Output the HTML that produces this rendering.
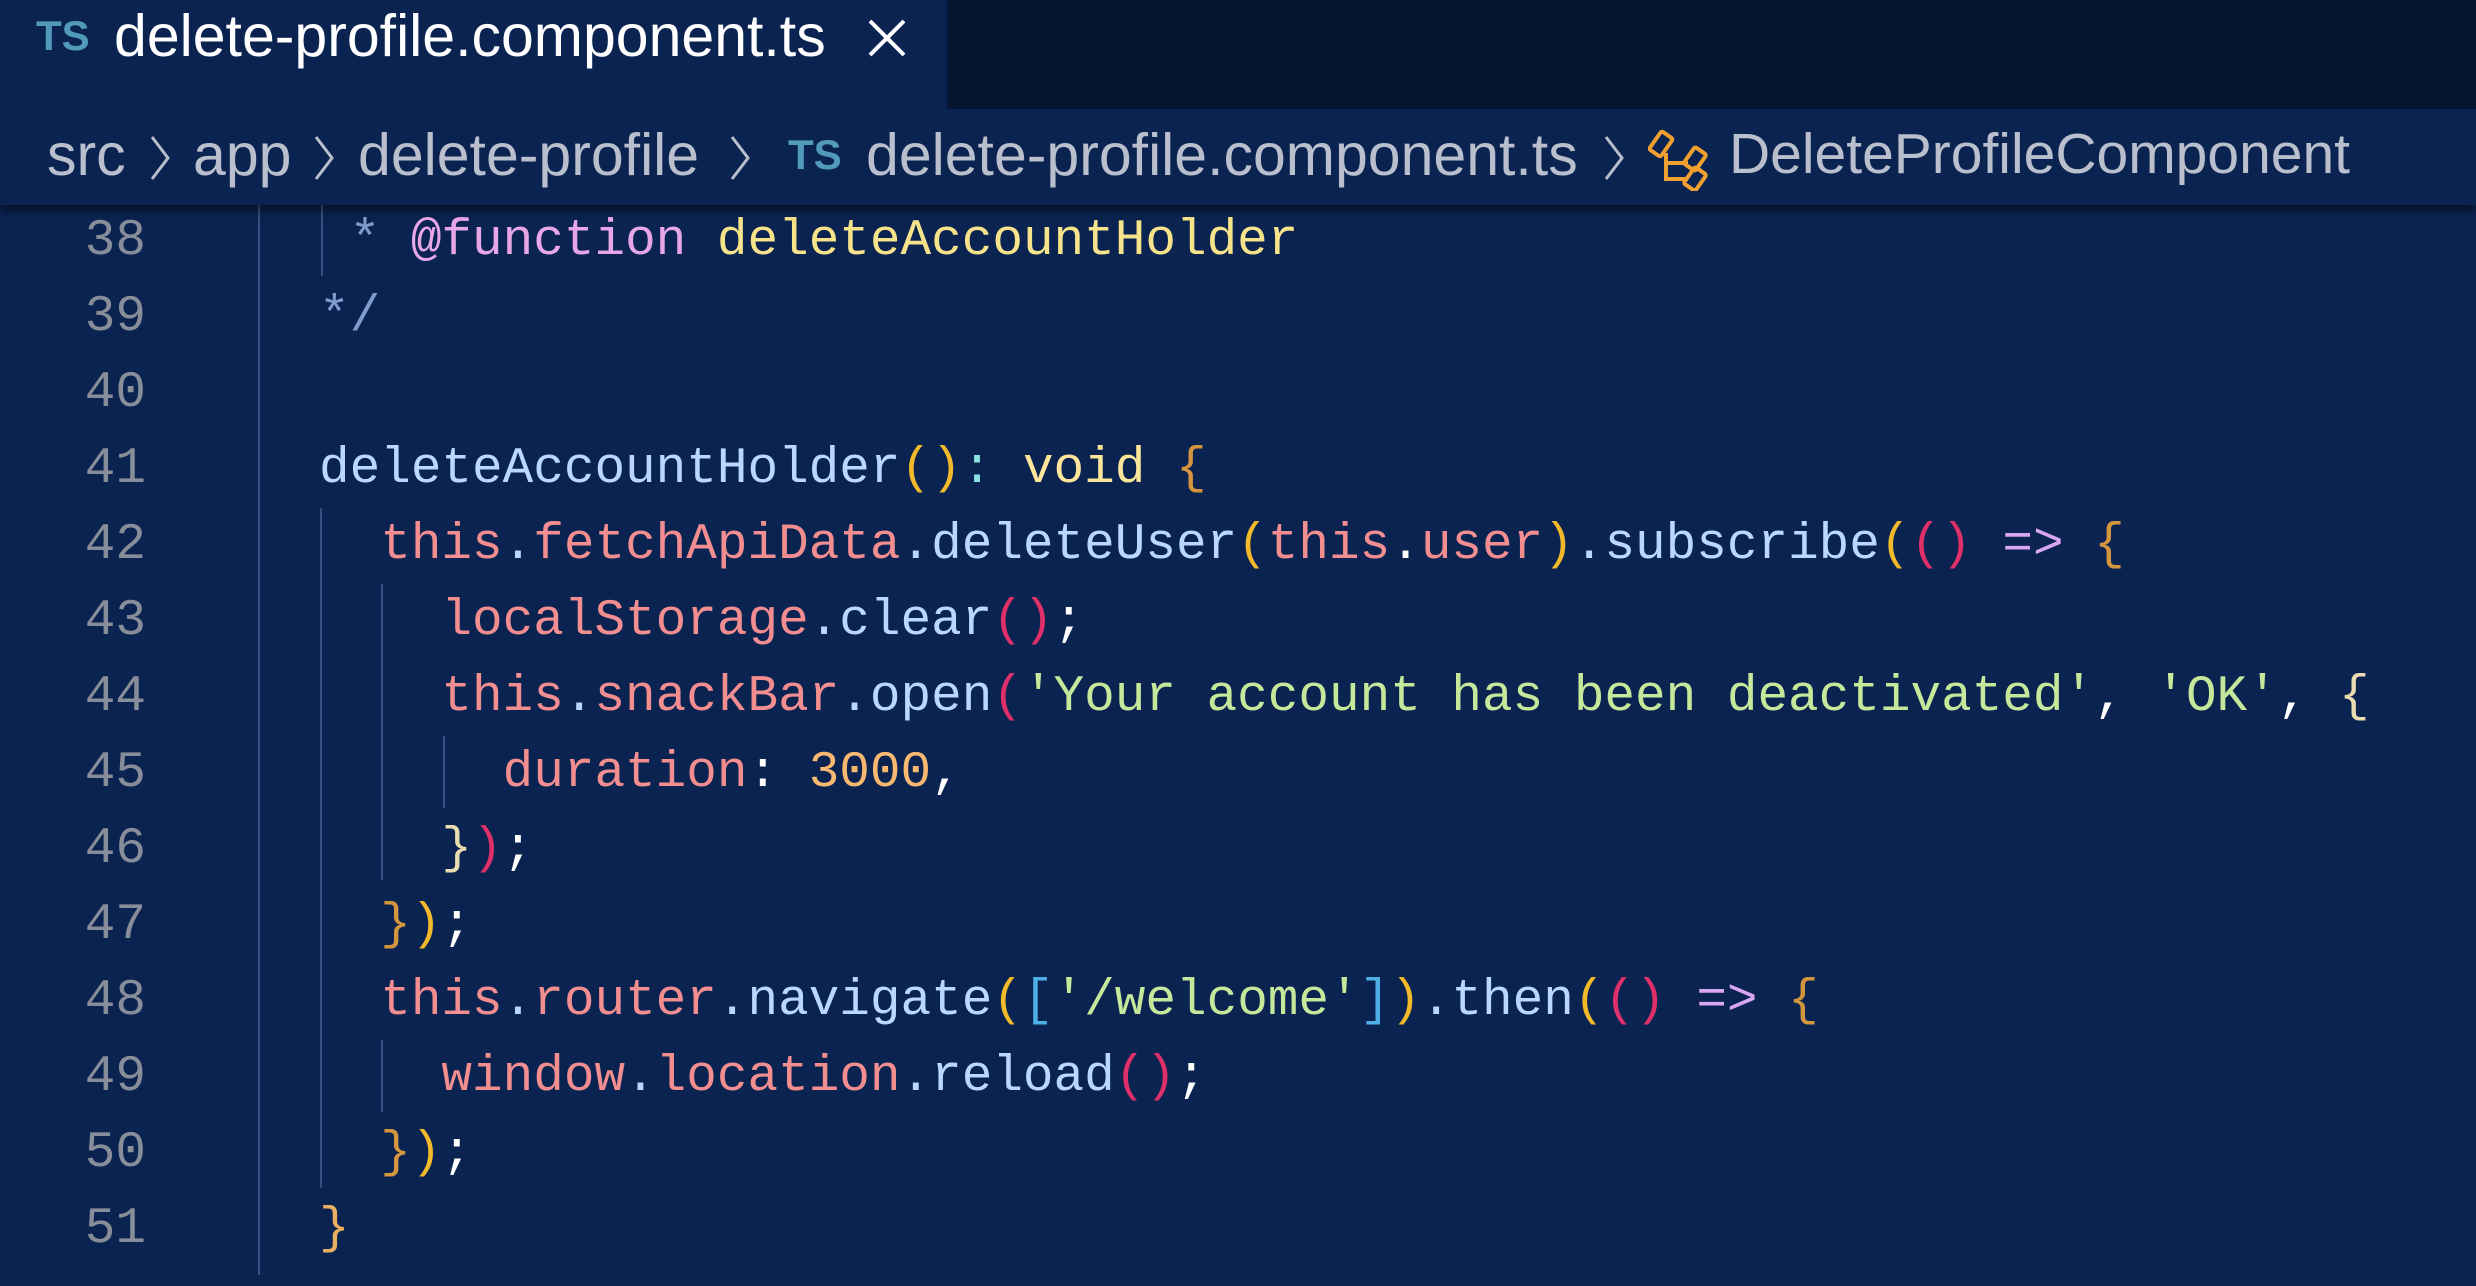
<!DOCTYPE html>
<html><head><meta charset="utf-8"><style>
*{margin:0;padding:0;box-sizing:border-box}
body{width:2476px;height:1286px;background:#0a2350;overflow:hidden;position:relative;font-family:"Liberation Sans",sans-serif}
.abs{position:absolute;white-space:pre}
#tabbar{position:absolute;left:0;top:0;width:2476px;height:109px;background:#061631}
#tab{position:absolute;left:0;top:0;width:947px;height:109px;background:#0a2350}
#crumb{position:absolute;left:0;top:109px;width:2476px;height:96px;background:#0a2350;box-shadow:0 6px 8px rgba(0,0,0,0.45);z-index:5}
.ts{font-weight:bold;color:#519aba;font-size:42px}
.cr{color:#b9bfcc;font-size:59px}
.chev{position:absolute}
.ln{position:absolute;left:0;width:146px;text-align:right;font-family:"Liberation Mono",monospace;font-size:51px;color:#878d99;line-height:76px;height:76px}
.code{position:absolute;left:319px;font-family:"Liberation Mono",monospace;font-size:51px;line-height:76px;height:76px;white-space:pre;color:#b8d8ff}
.g{position:absolute;width:2px;background:#3b4d82}
.t{color:#f28d90}.m{color:#b8d8ff}.p1{color:#f2b92a}.p2{color:#e0306a}.ar{color:#d9a6f2}.br{color:#d4953f}.s{color:#c5e89a}.w{color:#ffffff}.n{color:#f9b970}.k{color:#fde59a}.c{color:#8be3e3}.cm{color:#7f9ccc}.at{color:#e7a6e7}.fy{color:#f6e38a}.sq{color:#4fb0e8}.pb{color:#e8dcb0}
</style></head><body>
<div id="tabbar"><div id="tab"></div></div>
<div class="abs ts" style="left:36px;top:12px">TS</div>
<div class="abs" style="left:114px;top:2px;font-size:59px;color:#ffffff">delete-profile.component.ts</div>
<svg class="abs" style="left:866px;top:17px" width="42" height="42" viewBox="0 0 42 42"><path d="M4 4L38 38M38 4L4 38" stroke="#fff" stroke-width="4" fill="none"/></svg>

<div id="crumb">
<div class="abs cr" style="left:47px;top:12px">src</div>
<svg class="chev" style="left:148px;top:24px" width="24" height="50"><path d="M4 4L20 25L4 46" stroke="#b9bfcc" stroke-width="3" fill="none"/></svg>
<div class="abs cr" style="left:193px;top:12px">app</div>
<svg class="chev" style="left:312px;top:24px" width="24" height="50"><path d="M4 4L20 25L4 46" stroke="#b9bfcc" stroke-width="3" fill="none"/></svg>
<div class="abs cr" style="left:358px;top:12px">delete-profile</div>
<svg class="chev" style="left:728px;top:24px" width="24" height="50"><path d="M4 4L20 25L4 46" stroke="#b9bfcc" stroke-width="3" fill="none"/></svg>
<div class="abs ts" style="left:788px;top:22px">TS</div>
<div class="abs cr" style="left:866px;top:12px">delete-profile.component.ts</div>
<svg class="chev" style="left:1602px;top:24px" width="24" height="50"><path d="M4 4L20 25L4 46" stroke="#b9bfcc" stroke-width="3" fill="none"/></svg>
<svg class="abs" style="left:1648px;top:18px" width="66" height="64" viewBox="0 0 66 64"><g stroke="#f0a030" stroke-width="4" fill="none"><rect x="6" y="6" width="14" height="22" rx="2" transform="rotate(35 13 17)"/><rect x="40" y="22" width="14" height="20" rx="2" transform="rotate(35 47 32)"/><rect x="40" y="42" width="14" height="20" rx="2" transform="rotate(35 47 52)"/><path d="M18 26V52H40M18 36H40"/></g></svg>
<div class="abs cr" style="left:1729px;top:12px;font-size:57px">DeleteProfileComponent</div>
</div>

<div class="g" style="left:258px;top:205px;height:1070px"></div>
<div class="g" style="left:321px;top:205px;height:71px"></div>
<div class="g" style="left:320px;top:508px;height:680px"></div>
<div class="g" style="left:381px;top:584px;height:296px"></div>
<div class="g" style="left:381px;top:1040px;height:72px"></div>
<div class="g" style="left:443px;top:736px;height:72px"></div>

<div class="ln" style="top:204px">38</div>
<div class="ln" style="top:280px">39</div>
<div class="ln" style="top:356px">40</div>
<div class="ln" style="top:432px">41</div>
<div class="ln" style="top:508px">42</div>
<div class="ln" style="top:584px">43</div>
<div class="ln" style="top:660px">44</div>
<div class="ln" style="top:736px">45</div>
<div class="ln" style="top:812px">46</div>
<div class="ln" style="top:888px">47</div>
<div class="ln" style="top:964px">48</div>
<div class="ln" style="top:1040px">49</div>
<div class="ln" style="top:1116px">50</div>
<div class="ln" style="top:1192px">51</div>

<div class="code" style="top:204px"> <span class="cm">*</span> <span class="at">@function</span> <span class="fy">deleteAccountHolder</span></div>
<div class="code" style="top:280px"><span class="cm">*/</span></div>
<div class="code" style="top:432px"><span class="m">deleteAccountHolder</span><span class="p1">()</span><span class="c">:</span> <span class="k">void</span> <span class="br">{</span></div>
<div class="code" style="top:508px">  <span class="t">this</span><span class="m">.</span><span class="t">fetchApiData</span><span class="m">.deleteUser</span><span class="p1">(</span><span class="t">this</span><span class="w">.</span><span class="t">user</span><span class="p1">)</span><span class="m">.subscribe</span><span class="p1">(</span><span class="p2">()</span> <span class="ar">=&gt;</span> <span class="br">{</span></div>
<div class="code" style="top:584px">    <span class="t">localStorage</span><span class="m">.clear</span><span class="p2">()</span><span class="w">;</span></div>
<div class="code" style="top:660px">    <span class="t">this</span><span class="m">.</span><span class="t">snackBar</span><span class="m">.open</span><span class="p2">(</span><span class="s">'Your account has been deactivated'</span><span class="w">,</span> <span class="s">'OK'</span><span class="w">,</span> <span class="pb">{</span></div>
<div class="code" style="top:736px">      <span class="t">duration</span><span class="w">:</span> <span class="n">3000</span><span class="w">,</span></div>
<div class="code" style="top:812px">    <span class="pb">}</span><span class="p2">)</span><span class="w">;</span></div>
<div class="code" style="top:888px">  <span class="br">}</span><span class="p1">)</span><span class="w">;</span></div>
<div class="code" style="top:964px">  <span class="t">this</span><span class="m">.</span><span class="t">router</span><span class="m">.navigate</span><span class="p1">(</span><span class="sq">[</span><span class="s">'/welcome'</span><span class="sq">]</span><span class="p1">)</span><span class="m">.then</span><span class="p1">(</span><span class="p2">()</span> <span class="ar">=&gt;</span> <span class="br">{</span></div>
<div class="code" style="top:1040px">    <span class="t">window</span><span class="m">.</span><span class="t">location</span><span class="m">.reload</span><span class="p2">()</span><span class="w">;</span></div>
<div class="code" style="top:1116px">  <span class="br">}</span><span class="p1">)</span><span class="w">;</span></div>
<div class="code" style="top:1192px"><span class="br" style="color:#e8b060">}</span></div>
</body></html>
